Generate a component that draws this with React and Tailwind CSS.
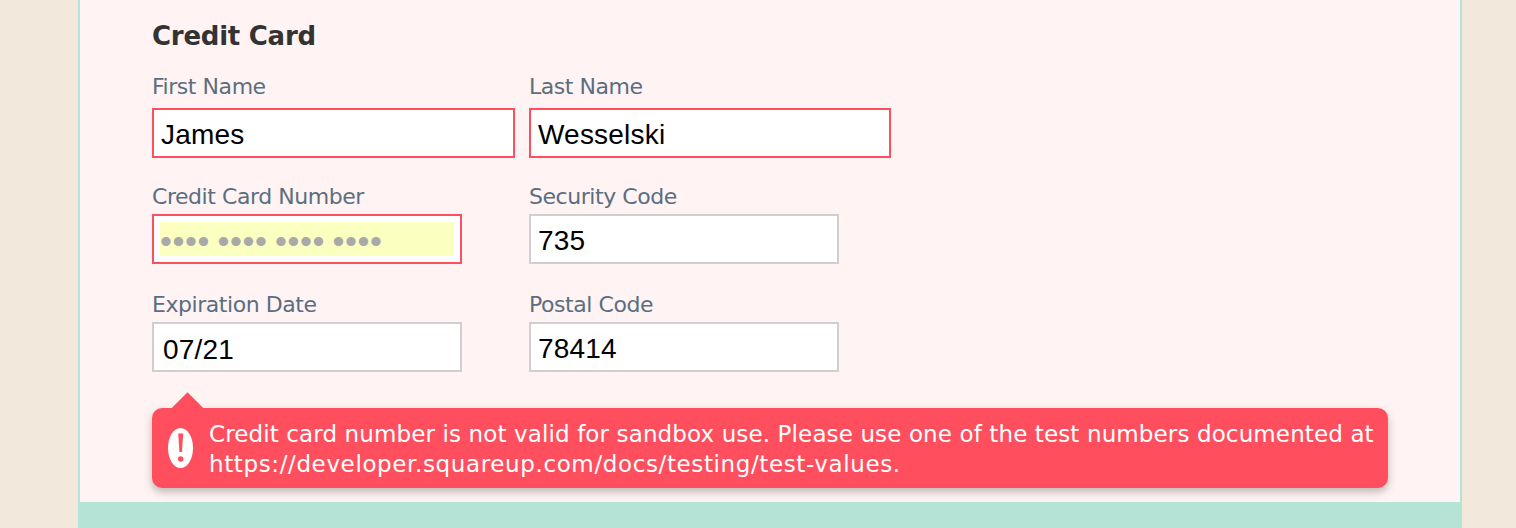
const labelText = "pt-[5px] text-[22px] leading-[28px] text-[#5a6e80] font-['DejaVu_Sans',sans-serif] tracking-[-0.45px]";

const Field = ({ label, value, width, invalid, labelHeight = 'h-[36px]', inset = 'pl-[7px] pt-[4px]' }) => (
  <div className={`flex flex-col ${width}`}>
    <label className={`${labelHeight} ${labelText}`}>{label}</label>
    <div
      className={`h-[50px] border-2 bg-white flex items-center text-[28px] text-black font-['Liberation_Sans',sans-serif] tracking-[0.2px] ${inset} ${
        invalid ? 'border-[#ff4f5e]' : 'border-[#cfcfcf]'
      }`}
    >
      {value}
    </div>
  </div>
);

const App = () => {
  return (
    <div className="h-[528px] overflow-hidden bg-[#f3e8dc] pl-[78px] pr-[54px]">
      <div className="h-[528px] flex flex-col">
        <div className="h-[502px] border-x-2 border-[#b5e3d6] bg-[#fff3f3] px-[72px] pt-[18px] flex flex-col">
          <h2 className="h-[36px] text-[26px] leading-[36px] font-bold text-[#333333] font-['DejaVu_Sans',sans-serif] tracking-[-0.25px]">
            Credit Card
          </h2>

          <div className="flex gap-[14px] mt-[14px]">
            <Field label="First Name" value="James" width="w-[363px]" labelHeight="h-[40px]" invalid />
            <Field label="Last Name" value="Wesselski" width="w-[362px]" labelHeight="h-[40px]" invalid />
          </div>

          <div className="flex gap-[67px] mt-[20px]">
            <div className="flex flex-col w-[310px]">
              <label className={`h-[36px] ${labelText}`}>Credit Card Number</label>
              <div className="h-[50px] border-2 border-[#ff4f5e] bg-white p-[6px]">
                <div className="h-[34px] bg-[#fbffc0] flex items-center gap-[7.5px] pt-[4px] text-[34px] leading-[30px] text-[#a9a9a9] font-['Liberation_Sans',sans-serif] tracking-[0.6px]">
                  <span>••••</span>
                  <span>••••</span>
                  <span>••••</span>
                  <span>••••</span>
                </div>
              </div>
            </div>
            <Field label="Security Code" value="735" width="w-[310px]" />
          </div>

          <div className="flex gap-[67px] mt-[22px]">
            <Field label="Expiration Date" value="07/21" width="w-[310px]" inset="pl-[9px] pt-[6px]" />
            <Field label="Postal Code" value="78414" width="w-[310px]" />
          </div>

          <div className="relative mt-[36px] h-[80px] w-[1236px] rounded-[10px] bg-[#ff4f5e] shadow-[0_4px_8px_rgba(0,0,0,0.25)] flex items-center pl-[16px] text-white">
            <div className="absolute left-[24px] top-[-11px] h-[23px] w-[23px] rotate-45 bg-[#ff4f5e]" />
            <svg width="25" height="40" viewBox="0 0 25 40" className="relative shrink-0">
              <ellipse cx="12.5" cy="20" rx="12.5" ry="20" fill="#ffffff" />
              <path d="M10.2 5.5h5l-1.2 18.5h-2.6z" fill="#ff4f5e" />
              <circle cx="12.7" cy="31" r="2.8" fill="#ff4f5e" />
            </svg>
            <p className="ml-[16px] pt-[1px] text-[23px] leading-[30px] font-['DejaVu_Sans',sans-serif]">
              <span className="block tracking-[0.12px]">
                Credit card number is not valid for sandbox use. Please use one of the test numbers documented at
              </span>
              <span className="block tracking-[0.62px]">
                https://developer.squareup.com/docs/testing/test-values.
              </span>
            </p>
          </div>
        </div>
        <div className="h-[26px] bg-[#b5e3d6]" />
      </div>
    </div>
  );
};

export default App;
